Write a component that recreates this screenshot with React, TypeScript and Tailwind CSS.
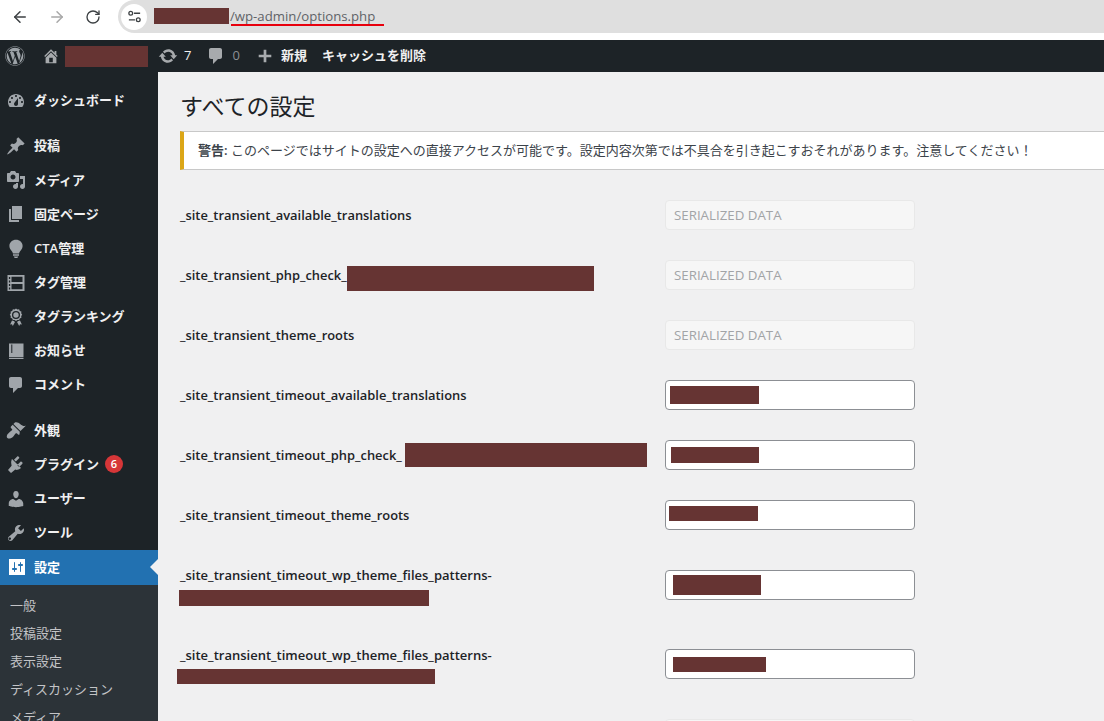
import { ArrowLeft, ArrowRight, RotateCw } from "lucide-react";
import { FaWordpress } from "react-icons/fa";
import type { ReactNode } from "react";

const Icon = ({ d, className = "w-5 h-5" }: { d: string; className?: string }) => (
  <svg viewBox="0 0 20 20" className={className} fill="currentColor">
    <path d={d} fillRule="evenodd" />
  </svg>
);

const icons = {
  dashboard:
    "M3.76 16h12.48c1.1-1.37 1.76-3.11 1.76-5 0-4.42-3.58-8-8-8s-8 3.58-8 8c0 1.89.66 3.63 1.76 5zM10 4c.55 0 1 .45 1 1s-.45 1-1 1-1-.45-1-1 .45-1 1-1zM6 6c.55 0 1 .45 1 1s-.45 1-1 1-1-.45-1-1 .45-1 1-1zm8 0c.55 0 1 .45 1 1s-.45 1-1 1-1-.45-1-1 .45-1 1-1zm-5.37 5.55L12 7v6c0 1.1-.9 2-2 2s-2-.9-2-2c0-.57.24-1.08.63-1.45zM4 10c.55 0 1 .45 1 1s-.45 1-1 1-1-.45-1-1 .45-1 1-1zm12 0c.55 0 1 .45 1 1s-.45 1-1 1-1-.45-1-1 .45-1 1-1z",
  pin: "M10.44 3.02l1.82-1.82 6.36 6.35-1.83 1.82c-1.05-.68-2.48-.57-3.41.36l-.75.75c-.92.93-1.04 2.35-.35 3.41l-1.83 1.82-2.41-2.41-2.8 2.79c-.42.42-3.38 2.71-3.8 2.29s1.86-3.39 2.28-3.81l2.79-2.79L4.1 9.36l1.83-1.82c1.05.69 2.48.57 3.4-.36l.75-.75c.93-.92 1.05-2.35.36-3.41z",
  media:
    "M13 11V4c0-.55-.45-1-1-1h-1.67L9 1H5L3.67 3H2c-.55 0-1 .45-1 1v7c0 .55.45 1 1 1h10c.55 0 1-.45 1-1zM7 4.5c1.38 0 2.5 1.12 2.5 2.5S8.38 9.5 7 9.5 4.5 8.38 4.5 7 5.62 4.5 7 4.5zM14 6h5v10.5c0 1.38-1.12 2.5-2.5 2.5S14 17.88 14 16.5s1.12-2.5 2.5-2.5c.17 0 .34.02.5.05V9h-3V6zm-4 8.05V13h2v3.5c0 1.38-1.12 2.5-2.5 2.5S7 17.88 7 16.5 8.12 14 9.5 14c.17 0 .34.02.5.05z",
  page: "M6 15V2h10v13H6zm-1 1h8v2H3V5h2v11z",
  bulb: "M10 .8c3.700 0 6.600 2.700 6.600 6.100 0 1.900-.9 3.300-1.900 4.500-.8 1-1.500 1.900-1.600 3.100H6.900c-.1-1.200-.8-2.100-1.600-3.100-1-1.200-1.900-2.600-1.900-4.500C3.400 3.500 6.300.8 10 .8zM7 15.300h6v1.500H7zM7.700 17.400h4.600l-1 1.600H8.700z",
  film: "M1.500 2h17v16h-17V2zM5.500 3.700V9h11V3.700h-11zm0 7.300v5.300h11V11h-11zM2.900 4v2h1.300V4H2.900zm0 3.500v2h1.300v-2H2.900zm0 3.500v2h1.300v-2H2.900zm0 3.500v2h1.300v-2H2.900z",
  award:
    "M10 1.500l1.400 1 1.700-.2.700 1.600 1.600.7-.2 1.700 1 1.400-1 1.400.2 1.700-1.600.7-.7 1.600-1.700-.2-1.400 1-1.400-1-1.700.2-.7-1.600-1.600-.7.2-1.700-1-1.400 1-1.400-.2-1.700 1.600-.7.7-1.600 1.700.2zM10 4a4 4 0 100 8 4 4 0 000-8zm0 1.300a2.700 2.700 0 110 5.400 2.700 2.700 0 010-5.400zM6 13.500l1.800.6 1.200 1-2.200 4-.8-1.800-1.900.1zM14 13.500l-1.800.6-1.200 1 2.200 4 .8-1.800 1.900.1z",
  book: "M3 2.500h14.500V16H3V2.500zM5.300 3.500V12h1V3.500h-1zM3 16.800h14.500V18H3z",
  comment:
    "M5 2h9c1.1 0 2 .9 2 2v7c0 1.1-.9 2-2 2h-2l-5 5v-5H5c-1.100 0-2-.9-2-2V4c0-1.100.9-2 2-2z",
  brush:
    "M14.480 11.060L7.410 3.990l1.500-1.500c.5-.56 2.300-.47 3.510.32 1.210.8 1.430 1.280 2.910 2.100 1.180.64 2.450 1.260 4.450.85zm-.71.71L6.700 4.700 4.930 6.470c-.39.39-.39 1.020 0 1.410l1.060 1.060c.39.39.39 1.030 0 1.420-.6.6-1.430 1.110-2.210 1.690-.35.26-.7.53-1.010.84C1.430 13.730 0 16.620 1.420 18.020c1.410 1.430 4.310 0 5.650-1.340.3-.3.58-.66.84-1 .58-.79 1.090-1.610 1.690-2.210.39-.39 1.020-.39 1.410 0l1.060 1.060c.39.39 1.020.39 1.410 0z",
  plugin:
    "M13.110 4.360L9.870 7.600 8 5.730l3.240-3.240c.35-.34 1.050-.2 1.560.32.52.51.66 1.210.31 1.550zm-8 1.770l.91-1.120 9.010 9.010-1.190.84c-.71.71-2.630 1.160-3.820 1L9.300 15.400l-4.300 3.600-3-3 3.600-4.300-.4-2.700c-.15-1.200.2-3.100.91-3.870zm11.250 3.510l-3.240 3.240-1.870-1.870 3.240-3.240c.35-.35 1.040-.2 1.550.31.52.52.67 1.210.32 1.560z",
  user: "M10 9.250c-2.270 0-2.730-3.440-2.730-3.440C7 4.020 7.820 2 9.970 2c2.160 0 2.980 2.020 2.710 3.810 0 0-.41 3.440-2.680 3.440zm0 2.570L12.720 10c2.390 0 4.520 2.330 4.520 4.530v2.490s-3.650 1.130-7.240 1.130c-3.650 0-7.240-1.130-7.240-1.130v-2.490c0-2.250 1.940-4.480 4.470-4.480z",
  wrench:
    "M16.680 9.770c-1.340 1.340-3.300 1.670-4.950.99l-5.410 6.520c-.99.99-2.590.99-3.570 0s-.99-2.590 0-3.570l6.520-5.420c-.68-1.650-.35-3.610.99-4.950 1.280-1.280 3.120-1.620 4.720-1.060l-2.890 2.890 2.820 2.820 2.860-2.860c.53 1.580.18 3.400-1.090 4.640zM4.680 16.610c.49-.49.49-1.280 0-1.770s-1.280-.49-1.770 0-.49 1.280 0 1.770 1.280.49 1.770 0z",
  settings:
    "M18 18V2H2v16h16zM8 11h1c.55 0 1 .45 1 1s-.45 1-1 1H8v1.500c0 .28-.22.5-.5.5s-.5-.22-.5-.5V13H6c-.55 0-1-.45-1-1s.45-1 1-1h1V5.500c0-.28.22-.5.5-.5s.5.22.5.5V11zm5-2h-1c-.55 0-1-.45-1-1s.45-1 1-1h1V5.500c0-.28.22-.5.5-.5s.5.22.5.5V7h1c.55 0 1 .45 1 1s-.45 1-1 1h-1v5.500c0 .28-.22.5-.5.5s-.5-.22-.5-.5V9z",
  home: "M16 8.500l1.530 1.530-1.060 1.060L10 4.620l-6.470 6.470-1.060-1.060L10 2.500l4 4v-2h2v4zm-6-2.460l6 5.990V18H4v-5.970zM12 17v-5H8v5h4z",
  update:
    "M10.200 3.280c3.530 0 6.430 2.610 6.920 6h2.080l-3.500 4-3.500-4h2.320c-.45-1.970-2.210-3.440-4.320-3.440-1.450 0-2.730.71-3.540 1.780L4.950 5.660C6.230 4.200 8.110 3.280 10.200 3.280zm-.4 13.440c-3.520 0-6.430-2.610-6.920-6H.8l3.500-4c1.170 1.330 2.330 2.670 3.500 4H5.480c.45 1.970 2.210 3.440 4.320 3.440 1.450 0 2.730-.71 3.540-1.780l1.710 1.950c-1.280 1.460-3.150 2.390-5.250 2.390z",
  plus: "M8.500 3h3v5.500H17v3h-5.500V17h-3v-5.500H3v-3h5.500z",
};

const MenuItem = ({ icon, children, className = "" }: { icon: string; children: ReactNode; className?: string }) => (
  <div className={`flex h-[34.15px] items-center text-[13px] font-semibold text-[#f0f0f1] ${className}`}>
    <span className="flex w-[34px] shrink-0 justify-center pl-[1px] pr-[3px] text-[#a0a5aa]">
      <Icon d={icon} />
    </span>
    {children}
  </div>
);

const Redact = ({ className }: { className: string }) => <span className={`block bg-[#663433] ${className}`} />;

const Serialized = () => (
  <div className="flex h-[30px] w-[250px] items-center rounded-[4px] border border-[#e8e8e8] bg-[#f6f6f6] pl-2 pt-[2px] text-[13.3px] text-[#a2a4a6]">
    SERIALIZED DATA
  </div>
);

const Filled = ({ bar }: { bar: string }) => (
  <div className="flex h-[30px] w-[250px] items-center rounded-[4px] border border-[#8c8f94] bg-white">
    <Redact className={bar} />
  </div>
);

const Row = ({ label, input, className = "h-[60px]" }: { label: ReactNode; input: ReactNode; className?: string }) => (
  <div className={`grid grid-cols-[485px_250px] ${className}`}>
    <div className="flex h-[30px] items-center pt-[2px] text-[12.9px] font-semibold text-[#1d2327]">{label}</div>
    {input}
  </div>
);

export default function App() {
  return (
    <div className="flex h-[721px] w-[1104px] flex-col overflow-hidden bg-white font-['Open_Sans','Noto_Sans_CJK_JP',sans-serif]">
      {/* browser toolbar */}
      <div className="flex h-10 shrink-0 items-start">
        <div className="flex h-[33px] w-[118px] items-center gap-[19px] pl-[11px] text-[#3c4043]">
          <ArrowLeft className="h-[18px] w-[18px]" strokeWidth={2} />
          <ArrowRight className="h-[18px] w-[18px] text-[#a8a8a8]" strokeWidth={2} />
          <RotateCw className="h-[16px] w-[16px]" strokeWidth={2} />
        </div>
        <div className="relative flex h-[33px] flex-1 items-center rounded-l-full bg-[#dfdfdf] pl-[3px]">
          <span className="flex h-[26px] w-[26px] items-center justify-center rounded-full bg-white text-[#3c4043]">
            <svg viewBox="0 0 16 16" className="h-[15px] w-[15px]" fill="none" stroke="currentColor" strokeWidth="1.4">
              <circle cx="4" cy="4.500" r="2" />
              <path d="M7.500 4.500H14M2 11.500h6.500" />
              <circle cx="12" cy="11.500" r="2" />
            </svg>
          </span>
          <Redact className="ml-[7px] mb-[1px] h-4 w-[75px]" />
          <span className="pl-[1px] text-[13.2px] text-[#5f6368]">/wp-admin/options.php</span>
          <span className="absolute left-[113px] top-6 h-[2px] w-[153px] bg-[#e8000d]" />
        </div>
      </div>

      {/* admin bar */}
      <div className="flex h-8 shrink-0 items-center bg-[#1d2327] text-[13px] text-[#f0f0f1]">
        <FaWordpress className="ml-[5px] h-5 w-5 text-[#9ca2a7]" />
        <span className="ml-[17px] text-[#a7aaad]"><Icon d={icons.home} className="h-[18px] w-[18px]" /></span>
        <Redact className="ml-[5px] h-[21px] w-[83px]" />
        <span className="ml-[10px] text-[#a7aaad]"><Icon d={icons.update} /></span>
        <span className="ml-[6px]">7</span>
        <span className="ml-[15px] text-[#a7aaad]"><Icon d={icons.comment} /></span>
        <span className="ml-[6px] text-[#8c8f94]">0</span>
        <span className="ml-[16px] text-[#a7aaad]"><Icon d={icons.plus} className="h-[18px] w-[18px]" /></span>
        <span className="ml-[7px] font-semibold">新規</span>
        <span className="ml-[15px] font-semibold">キャッシュを削除</span>
      </div>

      <div className="flex min-h-0 flex-1">
        {/* sidebar */}
        <aside className="w-[158px] shrink-0 bg-[#1d2327] pt-3">
          <MenuItem icon={icons.dashboard} className="mb-[11px]">ダッシュボード</MenuItem>
          <MenuItem icon={icons.pin}>投稿</MenuItem>
          <MenuItem icon={icons.media}>メディア</MenuItem>
          <MenuItem icon={icons.page}>固定ページ</MenuItem>
          <MenuItem icon={icons.bulb}>CTA管理</MenuItem>
          <MenuItem icon={icons.film}>タグ管理</MenuItem>
          <MenuItem icon={icons.award}>タグランキング</MenuItem>
          <MenuItem icon={icons.book}>お知らせ</MenuItem>
          <MenuItem icon={icons.comment} className="mb-[11px]">コメント</MenuItem>
          <MenuItem icon={icons.brush}>外観</MenuItem>
          <MenuItem icon={icons.plugin}>
            プラグイン
            <span className="ml-[6px] flex h-[18px] w-[18px] items-center justify-center rounded-full bg-[#d63638] text-[11px] text-white">6</span>
          </MenuItem>
          <MenuItem icon={icons.user}>ユーザー</MenuItem>
          <MenuItem icon={icons.wrench}>ツール</MenuItem>
          <div className="relative flex h-[35px] items-center bg-[#2271b1] text-[13px] font-semibold text-white">
            <span className="flex w-[34px] justify-center pl-[3px] pr-[3px]"><Icon d={icons.settings} /></span>
            設定
            <span className="absolute right-0 top-[9px] border-y-[8px] border-r-[8px] border-y-transparent border-r-[#f0f0f1]" />
          </div>
          <div className="bg-[#2c3338] py-[7px] text-[13px] text-[#c3c4c7]">
            {["一般", "投稿設定", "表示設定", "ディスカッション", "メディア"].map((s) => (
              <div key={s} className="flex h-7 items-center pl-[10px]">{s}</div>
            ))}
          </div>
        </aside>

        {/* content */}
        <main className="min-w-0 flex-1 overflow-hidden bg-[#f0f0f1] pl-[22px] pt-[17px]">
          <h1 className="text-[23px] leading-[34px] text-[#1d2327]">すべての設定</h1>
          <div className="mt-2 flex h-[39px] w-[1000px] items-center border-y border-[#c8c8c8] border-l-4 border-l-[#dba617] bg-white pl-[14px] text-[13px] text-[#3c434a]">
            <b className="font-semibold">警告:</b>&nbsp;このページではサイトの設定への直接アクセスが可能です。設定内容次第では不具合を引き起こすおそれがあります。注意してください！
          </div>

          <div className="mt-[30px]">
            <Row label="_site_transient_available_translations" input={<Serialized />} />
            <Row
              label={<>_site_transient_php_check_<Redact className="mt-[4px] h-[25px] w-[247px]" /></>}
              input={<Serialized />}
            />
            <Row label="_site_transient_theme_roots" input={<Serialized />} />
            <Row label="_site_transient_timeout_available_translations" input={<Filled bar="ml-[4px] h-[18px] w-[89px]" />} />
            <Row
              label={<>_site_transient_timeout_php_check_<Redact className="ml-[3px] mb-[2px] h-6 w-[242px]" /></>}
              input={<Filled bar="ml-[5px] h-4 w-[88px]" />}
            />
            <Row label="_site_transient_timeout_theme_roots" input={<Filled bar="ml-[3px] mb-[3px] h-[15px] w-[89px]" />} />
            <div className="mt-[10px] grid h-[79px] grid-cols-[485px_250px]">
              <div className="-mt-[5px] text-[13px] font-semibold leading-[20px] text-[#1d2327]">
                _site_transient_timeout_wp_theme_files_patterns-
                <Redact className="-ml-[1px] mt-[5px] h-4 w-[250px]" />
              </div>
              <Filled bar="ml-[7px] mb-[1px] h-5 w-[88px]" />
            </div>
            <div className="grid h-[70px] grid-cols-[485px_250px]">
              <div className="text-[13px] font-semibold leading-[12px] text-[#1d2327]">
                _site_transient_timeout_wp_theme_files_patterns-
                <Redact className="-ml-[3px] mt-[8px] h-[15px] w-[258px]" />
              </div>
              <Filled bar="ml-[7px] h-[15px] w-[93px]" />
            </div>
            {/* next disabled field, only its top edge is on screen */}
            <div className="ml-[485px] h-[30px] w-[250px] rounded-[4px] border border-[#e8e8e8] bg-[#f6f6f6]" />
          </div>
        </main>
      </div>
    </div>
  );
}
